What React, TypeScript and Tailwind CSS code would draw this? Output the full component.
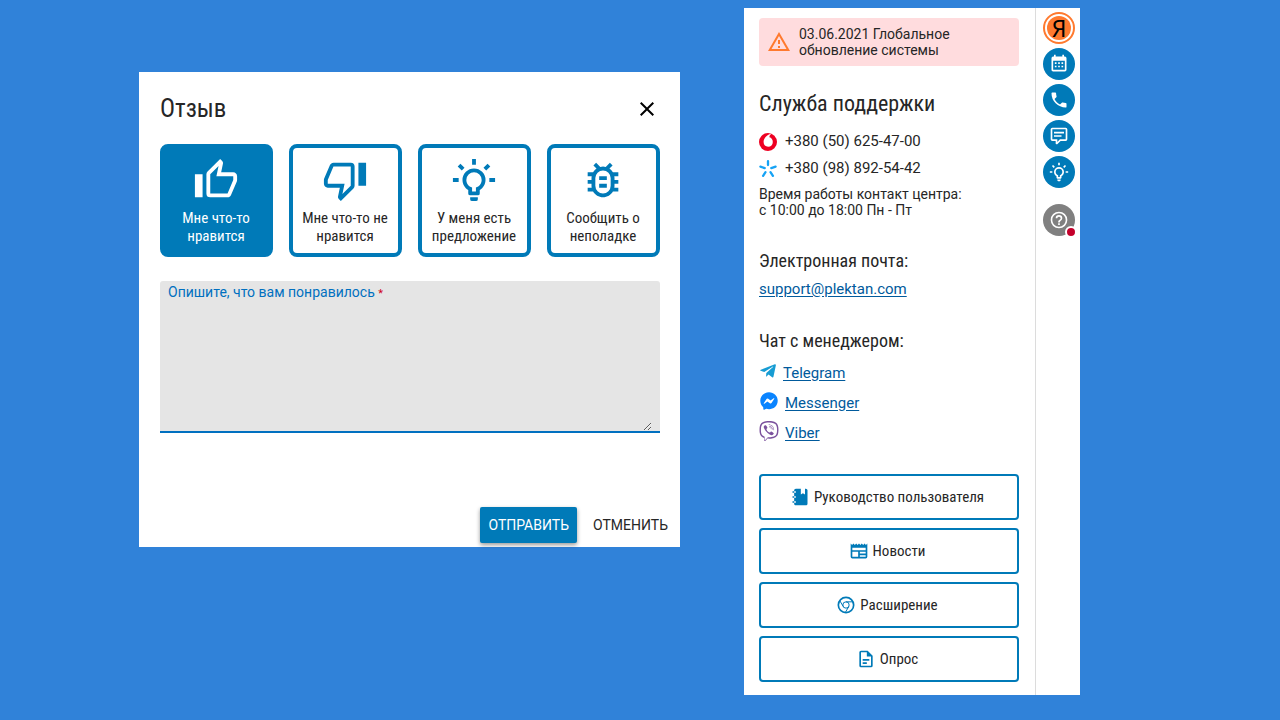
import { useState } from 'react';
import type { ReactNode } from 'react';
import { FaFacebookMessenger, FaTelegramPlane, FaViber } from 'react-icons/fa';

const icons = {
  thumbUp:
    'M5,9V21H1V9H5M9,21A2,2 0 0,1 7,19V9C7,8.45 7.22,7.95 7.59,7.59L14.17,1L15.23,2.06C15.5,2.33 15.67,2.7 15.67,3.11L15.64,3.43L14.69,8H21C22.11,8 23,8.9 23,10V12C23,12.26 22.95,12.5 22.86,12.73L19.84,19.78C19.54,20.5 18.83,21 18,21H9M9,19H18.03L21,12V10H12.21L13.34,4.68L9,9.03V19Z',
  thumbDown:
    'M19,15V3H23V15H19M15,3A2,2 0 0,1 17,5V15C17,15.55 16.78,16.05 16.41,16.41L9.83,23L8.77,21.94C8.5,21.67 8.33,21.3 8.33,20.88L8.36,20.57L9.31,16H3C1.89,16 1,15.1 1,14V12C1,11.74 1.05,11.5 1.14,11.27L4.16,4.22C4.46,3.5 5.17,3 6,3H15M15,5H5.97L3,12V14H11.78L10.65,19.32L15,14.97V5Z',
  bulb:
    'M20,11H23V13H20V11M1,11H4V13H1V11M13,1V4H11V1H13M4.92,3.5L7.05,5.64L5.63,7.05L3.5,4.93L4.92,3.5M16.95,5.63L19.07,3.5L20.5,4.93L18.37,7.05L16.95,5.63M12,6A6,6 0 0,1 18,12C18,14.22 16.79,16.16 15,17.2V19A1,1 0 0,1 14,20H10A1,1 0 0,1 9,19V17.2C7.21,16.16 6,14.22 6,12A6,6 0 0,1 12,6M14,21V22A1,1 0 0,1 13,23H11A1,1 0 0,1 10,22V21H14M11,18H13V15.87C14.73,15.43 16,13.86 16,12A4,4 0 0,0 12,8A4,4 0 0,0 8,12C8,13.86 9.27,15.43 11,15.87V18Z',
  bug:
    'M20 8h-2.81a5.985 5.985 0 0 0-1.82-1.96L17 4.41 15.59 3l-2.17 2.17a6.002 6.002 0 0 0-2.83 0L8.41 3 7 4.41l1.62 1.63C7.88 6.55 7.26 7.22 6.81 8H4v2h2.09c-.05.33-.09.66-.09 1v1H4v2h2v1c0 .34.04.67.09 1H4v2h2.81c1.04 1.79 2.97 3 5.19 3s4.15-1.21 5.19-3H20v-2h-2.09c.05-.33.09-.66.09-1v-1h2v-2h-2v-1c0-.34-.04-.67-.09-1H20V8zM16 15a4 4 0 0 1-8 0v-4a4 4 0 0 1 8 0zM10 14h4v2h-4zM10 10h4v2h-4z',
  close: 'M19,6.41L17.59,5L12,10.59L6.41,5L5,6.41L10.59,12L5,17.59L6.41,19L12,13.41L17.59,19L19,17.59L13.41,12L19,6.41Z',
  alert: 'M12,2L1,21H23M12,6L19.53,19H4.47M11,10V14H13V10M11,16V18H13V16',
  calendar:
    'M9,10V12H7V10H9M13,10V12H11V10H13M17,10V12H15V10H17M19,3A2,2 0 0,1 21,5V19A2,2 0 0,1 19,21H5C3.89,21 3,20.1 3,19V5A2,2 0 0,1 5,3H6V1H8V3H16V1H18V3H19M19,19V8H5V19H19M9,14V16H7V14H9M13,14V16H11V14H13M17,14V16H15V14H17Z',
  phone:
    'M6.62,10.79C8.06,13.62 10.38,15.94 13.21,17.38L15.41,15.18C15.69,14.9 16.08,14.82 16.43,14.93C17.55,15.3 18.75,15.5 20,15.5A1,1 0 0,1 21,16.5V20A1,1 0 0,1 20,21A17,17 0 0,1 3,4A1,1 0 0,1 4,3H7.5A1,1 0 0,1 8.5,4C8.5,5.25 8.7,6.45 9.07,7.57C9.18,7.92 9.1,8.31 8.82,8.59L6.62,10.79Z',
  comment:
    'M9,22A1,1 0 0,1 8,21V18H4A2,2 0 0,1 2,16V4C2,2.89 2.9,2 4,2H20A2,2 0 0,1 22,4V16A2,2 0 0,1 20,18H13.9L10.2,21.71C10,21.9 9.75,22 9.5,22V22H9M10,16V19.08L13.08,16H20V4H4V16H10M6,7H18V9H6V7M6,11H15V13H6V11Z',
  help:
    'M11,18H13V16H11V18M12,2A10,10 0 0,0 2,12A10,10 0 0,0 12,22A10,10 0 0,0 22,12A10,10 0 0,0 12,2M12,20C7.59,20 4,16.41 4,12C4,7.59 7.59,4 12,4C16.41,4 20,7.59 20,12C20,16.41 16.41,20 12,20M12,6A4,4 0 0,0 8,10H10A2,2 0 0,1 12,8A2,2 0 0,1 14,10C14,12 11,11.75 11,15H13C13,12.75 16,12.5 16,10A4,4 0 0,0 12,6Z',
  notebook:
    'M3,7V5H5V4C5,2.89 5.9,2 7,2H13V9L15.5,7.5L18,9V2H19C20.05,2 21,2.95 21,4V20C21,21.05 20.05,22 19,22H7C5.95,22 5,21.05 5,20V19H3V17H5V13H3V11H5V7H3M7,11H5V13H7V11M7,7V5H5V7H7M7,19V17H5V19H7Z',
  news:
    'M20,11H4V8H20M20,15H13V13H20M20,19H13V17H20M11,19H4V13H11M20.33,4.67L18.67,3L17,4.67L15.33,3L13.67,4.67L12,3L10.33,4.67L8.67,3L7,4.67L5.33,3L3.67,4.67L2,3V19A2,2 0 0,0 4,21H20A2,2 0 0,0 22,19V3L20.33,4.67Z',
  document:
    'M6,2A2,2 0 0,0 4,4V20A2,2 0 0,0 6,22H18A2,2 0 0,0 20,20V8L14,2H6M6,4H13V9H18V20H6V4M8,12V14H16V12H8M8,16V18H13V16H8Z',
};

function Icon({ path, className }: { path: string; className: string }) {
  return (
    <svg viewBox="0 0 24 24" fill="currentColor" fillRule="evenodd" className={className} aria-hidden="true">
      <path d={path} />
    </svg>
  );
}

function ChromeIcon() {
  return (
    <svg viewBox="0 0 24 24" fill="none" stroke="currentColor" className="size-5 text-[#007ab8]" aria-hidden="true">
      <circle cx="12" cy="12" r="9.2" strokeWidth="2" />
      <circle cx="12" cy="12" r="3.8" strokeWidth="1.2" />
      <path d="M12 8.2h8.4M8.7 13.9 4.5 6.7M15.3 13.9l-4.2 7.2" strokeWidth="1.2" />
    </svg>
  );
}

function VodafoneLogo() {
  return (
    <svg viewBox="0 0 18 18" className="size-[18px]" aria-hidden="true">
      <circle cx="9" cy="9" r="9" fill="#ee0022" />
      <path
        d="M9.1 13.800c-2.600 0-4.500-1.900-4.500-4.700C4.600 5.500 7.500 1.700 12.100.7c.5-.1.700.1.3.400-1.300.7-2 1.800-2 3.100 2.100.5 3.400 2.400 3.400 4.700 0 2.900-1.900 4.900-4.700 4.900z"
        fill="#fff"
      />
    </svg>
  );
}

function KyivstarLogo() {
  return (
    <svg viewBox="0 0 18 18" className="size-[18px]" stroke="#16a3f5" strokeWidth="2.3" strokeLinecap="round" aria-hidden="true">
      <path d="M9 1.200v3.800M1.400 6.700l4.300 1.400M16.600 6.700l-4.300 1.400M6.500 12.200l-2.400 3.600M11.500 12.200l2.400 3.600" />
    </svg>
  );
}

const feedbackTypes = [
  { icon: icons.thumbUp, label: 'Мне что-то нравится' },
  { icon: icons.thumbDown, label: 'Мне что-то не нравится' },
  { icon: icons.bulb, label: 'У меня есть предложение' },
  { icon: icons.bug, label: 'Сообщить о неполадке' },
];

const condensed = "font-['Roboto_Condensed',Roboto,sans-serif]";

function FeedbackDialog() {
  const [selected, setSelected] = useState(0);

  return (
    <section className="mt-16 w-full max-w-[541px] bg-white pb-1">
      <header className="flex items-center justify-between px-[21px] pt-[19px]">
        <h1 className={`${condensed} text-[25px] leading-9`}>Отзыв</h1>
        <button type="button" aria-label="Закрыть" className="text-black">
          <Icon path={icons.close} className="size-6" />
        </button>
      </header>

      <div className="mt-[17px] grid grid-cols-4 gap-4 pr-5 pl-[21px]">
        {feedbackTypes.map((type, index) => (
          <button
            key={type.label}
            type="button"
            onClick={() => setSelected(index)}
            className={`${condensed} flex h-[113px] flex-col items-center gap-1.5 rounded-lg border-4 border-[#007ab8] pt-[9px] pr-px text-[15px] leading-[18px] ${
              index === selected ? 'bg-[#007ab8] text-white' : 'bg-white'
            }`}
          >
            <Icon path={type.icon} className={`size-[46px] shrink-0 ${index === selected ? 'text-white' : 'text-[#007ab8]'}`} />
            <span>{type.label}</span>
          </button>
        ))}
      </div>

      <div className="mt-6 mr-5 ml-[21px] rounded-t-[3px] border-b-2 border-[#0070c0] bg-[#e5e5e5] px-2">
        <label htmlFor="feedback" className="block text-sm leading-[22px] text-[#0070c0]">
          Опишите, что вам понравилось <span className="text-[11px] text-[#d0021b]">*</span>
        </label>
        <textarea id="feedback" className="block h-[126px] w-full resize bg-transparent outline-none" />
      </div>

      <div className="mt-[74px] flex justify-end gap-2 pr-1 text-sm">
        <button
          type="button"
          className="h-9 rounded-xs bg-[#007ab8] px-2 text-white uppercase shadow-[0_2px_4px_rgba(0,0,0,0.4)]"
        >
          Отправить
        </button>
        <button type="button" className="h-9 px-2 uppercase">
          Отменить
        </button>
      </div>
    </section>
  );
}

function ContactLink({ href, icon, children }: { href: string; icon: ReactNode; children: ReactNode }) {
  return (
    <li className="flex h-[30px] items-center gap-1.5">
      <span className="pb-1">{icon}</span>
      <a href={href} className="text-[#005a9c] underline underline-offset-2">
        {children}
      </a>
    </li>
  );
}

function PanelButton({ icon, children }: { icon: ReactNode; children: ReactNode }) {
  return (
    <button
      type="button"
      className={`${condensed} flex h-[46px] items-center justify-center gap-1 rounded-sm border-2 border-[#007ab8] pr-1 text-[15px]`}
    >
      {icon}
      {children}
    </button>
  );
}

function SupportPanel() {
  return (
    <section className="min-w-0 flex-1 px-[15px] pt-2.5 pb-[13px] text-[15px]">
      <div className="mr-px flex items-center gap-2 rounded-sm bg-[#ffdcde] px-2 py-2 text-sm leading-4">
        <Icon path={icons.alert} className="size-6 shrink-0 text-[#ff7a2f]" />
        <p className="max-w-44">03.06.2021 Глобальное обновление системы</p>
      </div>

      <h2 className={`${condensed} mt-6 text-[22px] leading-7`}>Служба поддержки</h2>
      <ul className="mt-2.5">
        <li className="flex h-[27px] items-center gap-2">
          <VodafoneLogo />
          +380 (50) 625-47-00
        </li>
        <li className="flex h-[27px] items-center gap-2">
          <KyivstarLogo />
          +380 (98) 892-54-42
        </li>
      </ul>
      <p className="mt-1 text-sm leading-4">
        Время работы контакт центра:
        <br />с 10:00 до 18:00 Пн - Пт
      </p>

      <h3 className={`${condensed} mt-[31px] text-lg leading-6`}>Электронная почта:</h3>
      <a href="mailto:support@plektan.com" className="mt-1 block leading-6 text-[#005a9c] underline underline-offset-2">
        support@plektan.com
      </a>

      <h3 className={`${condensed} mt-7 text-lg leading-6`}>Чат с менеджером:</h3>
      <ul className="mt-[5px]">
        <ContactLink href="#telegram" icon={<FaTelegramPlane className="size-[18px] text-[#179cd3]" />}>
          Telegram
        </ContactLink>
        <ContactLink href="#messenger" icon={<FaFacebookMessenger className="mx-px size-[18px] text-[#0a84ff]" />}>
          Messenger
        </ContactLink>
        <ContactLink href="#viber" icon={<FaViber className="size-5 text-[#7b519d]" />}>
          Viber
        </ContactLink>
      </ul>

      <div className="mt-[26px] mr-px flex flex-col gap-2">
        <PanelButton icon={<Icon path={icons.notebook} className="size-5 text-[#007ab8]" />}>Руководство пользователя</PanelButton>
        <PanelButton icon={<Icon path={icons.news} className="size-5 text-[#007ab8]" />}>Новости</PanelButton>
        <PanelButton icon={<ChromeIcon />}>Расширение</PanelButton>
        <PanelButton icon={<Icon path={icons.document} className="size-5 text-[#007ab8]" />}>Опрос</PanelButton>
      </div>
    </section>
  );
}

const railButtons = [
  { icon: icons.calendar, label: 'Календарь' },
  { icon: icons.phone, label: 'Звонки' },
  { icon: icons.comment, label: 'Сообщения' },
  { icon: icons.bulb, label: 'Идеи' },
];

function IconRail() {
  return (
    <nav className="flex w-[45px] shrink-0 flex-col items-center gap-1 border-l border-[#dcdcdc] pt-1 pl-0.5">
      <button
        type="button"
        aria-label="Профиль"
        className="flex size-8 items-center justify-center rounded-full border-2 border-[#ff7a2f] bg-white p-0.5"
      >
        <span className="flex size-6 items-center justify-center rounded-full bg-[#ff7a2f] font-['Noto_Sans',sans-serif] text-[23px] leading-6 text-black">
          Я
        </span>
      </button>
      {railButtons.map((item) => (
        <button
          key={item.label}
          type="button"
          aria-label={item.label}
          className="flex size-8 items-center justify-center rounded-full bg-[#007ab8] text-white"
        >
          <Icon path={item.icon} className="size-5" />
        </button>
      ))}
      <button
        type="button"
        aria-label="Помощь"
        className="relative mt-3 flex size-8 items-center justify-center rounded-full bg-[#808080] text-white"
      >
        <Icon path={icons.help} className="size-5" />
        {/* unread marker */}
        <span className="absolute -right-0.5 -bottom-0.5 size-3 rounded-full border-2 border-white bg-[#c4002b]" />
      </button>
    </nav>
  );
}

export default function App() {
  return (
    <main className="flex min-h-screen items-start justify-center gap-16 bg-[#3082d9] pt-2 pr-[61px] pb-6 font-[Roboto,sans-serif] text-[#262626]">
      <FeedbackDialog />
      <aside className="flex w-full max-w-[336px] bg-white">
        <SupportPanel />
        <IconRail />
      </aside>
    </main>
  );
}
